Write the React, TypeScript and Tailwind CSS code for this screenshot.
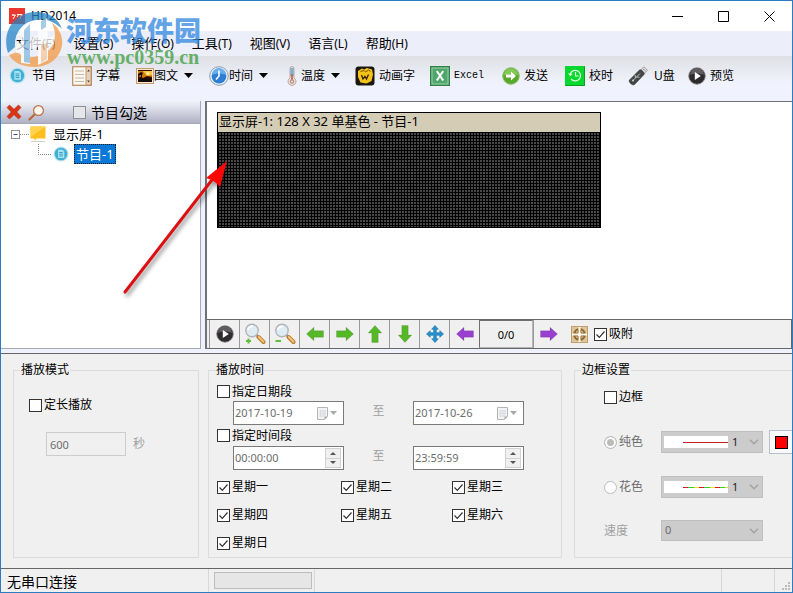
import React, { useState } from "react";

// --- Types
type IconProps = { className?: string };

type ToolItem = {
  label: string;
  icon: React.ReactNode;
  width: string;
  menu?: boolean;
  mono?: boolean;
};

// --- Icons
function ProgramIcon({ className = "size-4" }: IconProps) {
  return (
    <svg viewBox="0 0 16 16" className={className} aria-hidden="true">
      <circle cx="8" cy="8" r="7.5" fill="#b9e3f0" />
      <circle cx="8" cy="8" r="6.3" fill="#3fafd3" />
      <path d="M5 3.800h4.500l1.800 1.800V12H5z" fill="#a5e2f4" />
      <path d="M6.200 6.500h3.600M6.200 8.200h3.600M6.200 9.900h3.600" stroke="#2790b6" strokeWidth=".8" />
    </svg>
  );
}

function SubtitleIcon() {
  return (
    <svg viewBox="0 0 20 20" className="size-5" aria-hidden="true">
      <rect x=".7" y=".7" width="18.600" height="18.600" fill="#faf6f0" stroke="#b98a5e" strokeWidth="1.200" />
      <path d="M3 5h9M3 8.500h9M3 12h9M3 15.500h9" stroke="#c9b8a6" />
      <rect x="14" y="1" width="5" height="18" fill="#e6d2bc" stroke="#b98a5e" strokeWidth=".8" />
      <path d="M15.200 5.500l1.300-2 1.300 2zM15.200 14.500l1.300 2 1.300-2z" fill="#5b3414" />
    </svg>
  );
}

function PictureIcon() {
  return (
    <svg viewBox="0 0 18 16" className="h-4 w-[18px]" aria-hidden="true">
      <rect x=".5" y=".5" width="17" height="15" fill="#f6e9d8" stroke="#c99a6a" />
      <rect x="2" y="2" width="14" height="12" fill="#2a1204" />
      <path d="M2 3h14v6l-5-1-4 2-5-2z" fill="#d97a0c" />
      <path d="M7 3h9v4l-5 1z" fill="#ffc43a" />
      <circle cx="12" cy="5.500" r="1.500" fill="#fff3a8" />
      <path d="M2 6l3-2 2 1-1 2v4H5V7L2 8zM2 12c4-3 9-2 14-1v3H2z" fill="#160a04" />
    </svg>
  );
}

function ClockIcon() {
  return (
    <svg viewBox="0 0 20 20" className="size-5" aria-hidden="true">
      <circle cx="10" cy="10" r="9.300" fill="#e9f1fa" stroke="#8d9db0" />
      <circle cx="10" cy="10" r="7.400" fill="#2d7fd6" />
      <path d="M3 9a7 7 0 0 1 14 0c-4-2-10-2-14 0z" fill="#69aff0" />
      <path d="M10 4.500V10l-3 3.500" stroke="#fff" strokeWidth="1.600" fill="none" />
    </svg>
  );
}

function ThermometerIcon() {
  return (
    <svg viewBox="0 0 10 20" className="mr-1 h-5 w-[10px]" aria-hidden="true">
      <path d="M3 2.500a2 2 0 0 1 4 0V12a4 4 0 1 1-4 0z" fill="#e9e2de" stroke="#a79a94" strokeWidth=".8" />
      <path d="M3.300 2h3.400v8H3.300z" fill="#7fafcb" />
      <path d="M4.200 8h1.600v6H4.200z" fill="#cc5a35" />
      <circle cx="5" cy="15.500" r="2.200" fill="#c08a7c" />
      <circle cx="5" cy="15.500" r="1" fill="#f4e6e2" />
    </svg>
  );
}

function AnimatedTextIcon() {
  return (
    <svg viewBox="0 0 20 20" className="size-5" aria-hidden="true">
      <rect x=".5" y=".5" width="19" height="19" rx="3" fill="#1c1610" />
      <path d="M3 5l4-2.500 2 1L12 2l5 1.500 1 5-1.500 6.500-5 2.500-6-1L3 11z" fill="#f6c318" />
      <path d="M5.500 5.500l3.500-1 1.500 1.500 3-2 2 1.500" stroke="#7c5200" fill="none" />
      <path d="M6.500 9l1.500 4 2-2.500 1.500 2.500 2-4.500" stroke="#382100" strokeWidth="1.300" fill="none" />
    </svg>
  );
}

function ExcelIcon() {
  return (
    <svg viewBox="0 0 20 20" className="size-5" aria-hidden="true">
      <rect x=".5" y=".5" width="19" height="19" fill="#3f9a5d" stroke="#2f7f49" />
      <rect x="2" y="2" width="16" height="16" fill="#4fa76b" stroke="#9bd0aa" />
      <path d="M6.800 5l6.400 9.500M13.200 5l-6.400 9.500" stroke="#fff" strokeWidth="2" />
    </svg>
  );
}

function SendIcon() {
  return (
    <svg viewBox="0 0 18 18" className="size-[18px]" aria-hidden="true">
      <circle cx="9" cy="9" r="8.300" fill="#57a82b" stroke="#8fbf70" />
      <path d="M1.800 8.500a7.200 7.200 0 0 1 14.400 0c-4-2-10-2-14.400 0z" fill="#83c955" />
      <path d="M4 7.500h5V4.500L14 9l-5 4.500v-3H4z" fill="#fff" />
    </svg>
  );
}

function SyncTimeIcon() {
  return (
    <svg viewBox="0 0 20 20" className="size-5" aria-hidden="true">
      <rect width="20" height="20" fill="#08d82d" />
      <path d="M.5 19.500h19V.5" stroke="#079e24" fill="none" />
      <path d="M5.200 8A5.300 5.300 0 1 1 6 12.800" stroke="#dfffe2" strokeWidth="1.300" fill="none" />
      <path d="M3 7.500l2.300 2.800 2.400-2.500z" fill="#dfffe2" />
      <path d="M10.500 6v4h3" stroke="#dfffe2" strokeWidth="1.200" fill="none" />
    </svg>
  );
}

function UsbIcon() {
  return (
    <svg viewBox="0 0 20 20" className="mr-[2px] size-5" aria-hidden="true">
      <path d="M12.500 4.500L16 .8l3.500 3.500-3.700 3.500z" fill="#e2e2e2" stroke="#8d8d8d" strokeWidth=".8" />
      <path d="M15.500 3.200l.8.800M17 4.500l.7.700" stroke="#555" />
      <path d="M1.500 14L11.500 4c1.500-1.200 5.500 2.800 4.500 4.500L6.500 18.500c-2 1.500-6.500-2.500-5-4.500z" fill="#464646" stroke="#2a2a2a" strokeWidth=".6" />
      <path d="M5 14.500L12 7.500M7.500 12l-.3-3M8.500 11l3 .2" stroke="#c9c9c9" strokeWidth=".9" fill="none" />
      <circle cx="5" cy="14.500" r="1.100" fill="#c9c9c9" />
    </svg>
  );
}

function PlayIcon() {
  return (
    <svg viewBox="0 0 18 18" className="size-[18px]" aria-hidden="true">
      <circle cx="9" cy="9" r="8.300" fill="#2e2c2e" stroke="#8a8a8a" strokeWidth=".8" />
      <path d="M2 8a7 7 0 0 1 14 0c-4-2-10-2-14 0z" fill="#605d60" />
      <path d="M6.800 5l6 4-6 4z" fill="#fff" />
    </svg>
  );
}

function ZoomGlass({ minus = false }: { minus?: boolean }) {
  return (
    <svg viewBox="0 0 22 22" className="size-[22px]" aria-hidden="true">
      <path d="M12 11.500l3 3" stroke="#8d9298" strokeWidth="2" />
      <path d="M14.500 14l5 5" stroke="#b8782c" strokeWidth="4" strokeLinecap="round" />
      <path d="M14.800 14l4.700 4.700" stroke="#f6c377" strokeWidth="2" strokeLinecap="round" />
      <circle cx="8" cy="7.500" r="6.200" fill="#dfecf3" stroke="#b0b4b8" strokeWidth="1.400" />
      <path d="M4 7a4 4 0 0 1 5-3.500" stroke="#fff" strokeWidth="1.600" fill="none" />
      {minus ? (
        <path d="M1.500 18H7" stroke="#62bd3c" strokeWidth="2" />
      ) : (
        <path d="M2 18h5M4.500 15.500v5" stroke="#62bd3c" strokeWidth="2" />
      )}
    </svg>
  );
}

// arrow points to the left, rotated for the other directions
function ArrowIcon({ className = "" }: IconProps) {
  return (
    <svg viewBox="0 0 18 18" className={`size-[18px] ${className}`} aria-hidden="true">
      <path d="M.5 9l7.500-6.800v3.600h9.500v6.400H8v3.600z" fill="currentColor" stroke="#000" strokeOpacity=".15" strokeWidth=".8" />
    </svg>
  );
}

function MoveIcon() {
  return (
    <svg viewBox="0 0 18 18" className="size-[18px]" aria-hidden="true">
      <path
        d="M9 .5l3.300 3.700h-2v3.500h3.500v-2L17.500 9l-3.700 3.300v-2h-3.500v3.500h2L9 17.500l-3.300-3.700h2v-3.500H4.200v2L.5 9l3.700-3.300v2h3.500V4.200h-2z"
        fill="#2592d0"
        stroke="#17699d"
        strokeWidth=".6"
      />
    </svg>
  );
}

function TargetIcon() {
  return (
    <svg viewBox="0 0 17 17" className="size-[17px]" aria-hidden="true">
      <rect x=".5" y=".5" width="16" height="16" fill="#dcc69d" stroke="#bfa06c" />
      <circle cx="8.500" cy="8.500" r="5.400" fill="#f3e6cc" stroke="#94692c" strokeWidth="2" />
      <path d="M8.500 1v15M1 8.500h15" stroke="#fffaf0" strokeWidth="2.200" />
      <path d="M7 4v3H4M10 4v3h3M7 13v-3H4M10 13v-3h3" stroke="#94692c" fill="none" />
    </svg>
  );
}

function Chevron() {
  return (
    <svg viewBox="0 0 10 6" className="pointer-events-none absolute top-2 right-1 h-[6px] w-[10px]" aria-hidden="true">
      <path d="M1 .8l4 4 4-4" stroke="#a2a2a2" strokeWidth="1.400" fill="none" />
    </svg>
  );
}

// --- Controls
function Check({
  label,
  defaultChecked = false,
  soft = false,
  className = "",
}: {
  label: string;
  defaultChecked?: boolean;
  soft?: boolean;
  className?: string;
}) {
  const [checked, setChecked] = useState<boolean>(defaultChecked);
  return (
    <label className={`flex items-center whitespace-nowrap ${soft ? "gap-[5px]" : "gap-[2px]"} ${className}`}>
      <span className="relative size-[13px] shrink-0">
        <input
          type="checkbox"
          checked={checked}
          onChange={(e) => setChecked(e.target.checked)}
          className={[
            "block size-[13px] appearance-none border",
            soft ? "border-[#8e8f8f] bg-[#e6e6ea]" : "border-[#333333] bg-white",
          ].join(" ")}
        />
        {checked && (
          <svg viewBox="0 0 13 13" className="pointer-events-none absolute inset-0 size-[13px]" aria-hidden="true">
            <path d="M2.500 6.500l2.800 2.800 5.200-5.800" stroke="#333" strokeWidth="1.200" fill="none" />
          </svg>
        )}
      </span>
      {label}
    </label>
  );
}

function DateField({ value, name }: { value: string; name: string }) {
  return (
    <div className="flex h-6 w-[111px] items-center border border-[#7a7a7a] bg-white">
      <input
        aria-label={name}
        defaultValue={value}
        disabled
        className="min-w-0 flex-1 pl-px text-[11px] text-[#6d6d6d]"
      />
      <button type="button" disabled aria-label="日历" className="flex items-center gap-[2px] pr-[6px]">
        <svg viewBox="0 0 11 13" className="h-[13px] w-[11px]" aria-hidden="true">
          <path d="M.5.500h10v9l-3 3h-7z" fill="#f4f4f4" stroke="#b5b5b5" />
          <path d="M2 4h7M2 6.500h7M2 9h6M3.500 3v7M6 3v7M8 3v6" stroke="#ccd0dc" strokeWidth=".6" />
          <path d="M10.500 9.500h-3v3z" fill="#a9a9a9" />
        </svg>
        <svg viewBox="0 0 7 4" className="h-1 w-[7px]" aria-hidden="true">
          <path d="M0 0h7L3.500 4z" fill="#a9a9a9" />
        </svg>
      </button>
    </div>
  );
}

function TimeField({ value, name }: { value: string; name: string }) {
  return (
    <div className="flex h-6 w-[111px] items-center border border-[#7a7a7a] bg-white pr-[2px]">
      <input
        aria-label={name}
        defaultValue={value}
        disabled
        className="min-w-0 flex-1 pl-px text-[11px] text-[#6d6d6d]"
      />
      <div className="grid h-5 w-4 grid-rows-2 gap-px bg-[#d2d2d2] p-px">
        <button type="button" disabled aria-label="增加" className="grid place-items-center bg-[#f0f0f0]">
          <svg viewBox="0 0 6 3" className="h-[3px] w-[6px]" aria-hidden="true">
            <path d="M0 3h6L3 0z" fill="#555" />
          </svg>
        </button>
        <button type="button" disabled aria-label="减少" className="grid place-items-center bg-[#f0f0f0]">
          <svg viewBox="0 0 6 3" className="h-[3px] w-[6px]" aria-hidden="true">
            <path d="M0 0h6L3 3z" fill="#555" />
          </svg>
        </button>
      </div>
    </div>
  );
}

function LineSelect({ name, colorful = false }: { name: string; colorful?: boolean }) {
  return (
    <div className="relative w-[102px]">
      <select
        aria-label={name}
        disabled
        className="block h-[22px] w-full appearance-none border border-[#bfbfbf] bg-[#cccccc] pl-[70px] text-[11px] text-[#222222] opacity-100"
      >
        <option>1</option>
      </select>
      <svg viewBox="0 0 64 12" className="pointer-events-none absolute top-[5px] left-[3px] h-3 w-16" aria-hidden="true">
        <rect width="64" height="12" fill="#fff" />
        {colorful ? (
          <>
            <rect x="19" y="6" width="45" height="1" fill="#2fd02a" />
            <path d="M19 6h5v1h-5zM35 6h5v1h-5zM51 6h5v1h-5z" fill="#d0181e" />
            <path d="M30 6h5v1h-5zM46 6h5v1h-5zM61 6h3v1h-3z" fill="#e8dc2a" />
          </>
        ) : (
          <rect x="19" y="6" width="45" height="1" fill="#c31f22" />
        )}
      </svg>
      <Chevron />
    </div>
  );
}

// --- Data
const MENUS = ["文件(F)", "设置(S)", "操作(O)", "工具(T)", "视图(V)", "语言(L)", "帮助(H)"];

const TOOLS: ToolItem[] = [
  { label: "节目", icon: <ProgramIcon className="mr-[2px] size-[17px]" />, width: "w-[63px]" },
  { label: "字幕", icon: <SubtitleIcon />, width: "w-16" },
  { label: "图文", icon: <PictureIcon />, width: "w-[73px]", menu: true },
  { label: "时间", icon: <ClockIcon />, width: "w-[78px]", menu: true },
  { label: "温度", icon: <ThermometerIcon />, width: "w-[68px]", menu: true },
  { label: "动画字", icon: <AnimatedTextIcon />, width: "w-[75px]" },
  { label: "Excel", icon: <ExcelIcon />, width: "w-[72px]", mono: true },
  { label: "发送", icon: <SendIcon />, width: "w-[63px]" },
  { label: "校时", icon: <SyncTimeIcon />, width: "w-[63px]" },
  { label: "U盘", icon: <UsbIcon />, width: "w-[60px]" },
  { label: "预览", icon: <PlayIcon />, width: "w-16" },
];

const VIEW_TOOLS = [
  { label: "播放", icon: <PlayIcon /> },
  { label: "放大", icon: <ZoomGlass /> },
  { label: "缩小", icon: <ZoomGlass minus /> },
  { label: "左移", icon: <ArrowIcon className="text-[#55b827]" /> },
  { label: "右移", icon: <ArrowIcon className="rotate-180 text-[#55b827]" /> },
  { label: "上移", icon: <ArrowIcon className="rotate-90 text-[#55b827]" /> },
  { label: "下移", icon: <ArrowIcon className="-rotate-90 text-[#55b827]" /> },
  { label: "居中", icon: <MoveIcon /> },
  { label: "上一页", icon: <ArrowIcon className="text-[#9a3fd0]" /> },
];

const WEEKDAYS = ["星期一", "星期二", "星期三", "星期四", "星期五", "星期六", "星期日"];

// --- Sections
function TitleBar() {
  return (
    <header className="flex h-[30px] items-center bg-white pl-2">
      <svg viewBox="0 0 16 16" className="size-4" aria-hidden="true">
        <rect width="16" height="16" fill="#e8382f" />
        <path d="M3 7h3.500L4 11M4 6v2M8 6.500h4.500L11 11M8 9l2-3M13 6v2" stroke="#fff" fill="none" />
      </svg>
      <h1 className="ml-[6px] text-[12px] text-black">HD2014</h1>
      <div className="ml-auto flex h-full">
        <button type="button" aria-label="最小化" className="grid w-[46px] place-items-center">
          <svg viewBox="0 0 11 11" className="size-[11px]" aria-hidden="true">
            <path d="M0 5.500h11" stroke="#000" />
          </svg>
        </button>
        <button type="button" aria-label="最大化" className="grid w-[46px] place-items-center">
          <svg viewBox="0 0 11 11" className="size-[11px]" aria-hidden="true">
            <path d="M.5.500h10v10H.5z" stroke="#000" fill="none" />
          </svg>
        </button>
        <button type="button" aria-label="关闭" className="grid w-[46px] place-items-center">
          <svg viewBox="0 0 11 11" className="size-[11px]" aria-hidden="true">
            <path d="M.5.500l10 10M10.500.500l-10 10" stroke="#000" />
          </svg>
        </button>
      </div>
    </header>
  );
}

function ProgramTree() {
  return (
    <aside className="flex w-[200px] shrink-0 flex-col border-r border-b border-[#a5a9b5] bg-white">
      <div className="flex h-[23px] items-center border-b border-[#a5a9b5] bg-linear-to-b from-[#f1f3fb] to-[#b0b2c4] pl-[5px]">
        <button type="button" aria-label="删除">
          <svg viewBox="0 0 16 16" className="size-4" aria-hidden="true">
            <path d="M1 3.500L3.500 1 8 5.200 12.500 1 15 3.500 10.800 8l4.200 4.500-2.500 2.500L8 10.800 3.500 15 1 12.500 5.200 8z" fill="#d93617" stroke="#a8260e" strokeWidth=".5" />
          </svg>
        </button>
        <button type="button" aria-label="查找" className="ml-[6px]">
          <svg viewBox="0 0 17 17" className="size-[17px]" aria-hidden="true">
            <path d="M1.500 15.500L7 10" stroke="#b8683a" strokeWidth="2.200" strokeLinecap="round" />
            <circle cx="10.500" cy="6.500" r="4.900" fill="#fdf6ee" stroke="#b8734a" strokeWidth="1.200" />
          </svg>
        </button>
        <Check label="节目勾选" soft className="ml-7 text-[14px]" />
      </div>
      <ul className="text-[13px] leading-5">
        <li className="flex h-5 items-center pl-[10px]">
          <svg viewBox="0 0 18 20" className="h-5 w-[18px]" aria-hidden="true">
            <rect x=".5" y="6.500" width="8" height="8" fill="#fff" stroke="#919191" />
            <path d="M2.500 10.500h4" stroke="#3a52a4" />
            <path d="M9 10.500h9" stroke="#8a8a8a" strokeDasharray="1 1" />
          </svg>
          <svg viewBox="0 0 18 18" className="size-[18px]" aria-hidden="true">
            <path d="M1.500 1.500h15v12h-9l-2 2.500v-2.500h-4z" fill="#fdbf1e" />
            <path d="M1.500 1.500h15L1.500 12z" fill="#ffd34d" />
            <path d="M2 16.500h14" stroke="#d2d2d2" />
          </svg>
          <span className="ml-[6px]">显示屏-1</span>
        </li>
        <li className="flex h-5 items-center pl-[36px]">
          <svg viewBox="0 0 14 20" className="h-5 w-[14px]" aria-hidden="true">
            <path d="M1.500 0v10.500H14" stroke="#8a8a8a" strokeDasharray="1 1" fill="none" />
          </svg>
          <ProgramIcon className="ml-[2px] size-4" />
          <span className="ml-[5px] border border-dotted border-[#1b1b1b] bg-[#0a78d6] px-px leading-[18px] text-white">
            节目-1
          </span>
        </li>
      </ul>
    </aside>
  );
}

function ScreenView() {
  return (
    <section className="flex min-w-0 flex-1 flex-col border-t border-l-2 border-[#6f7278] bg-white">
      <div className="flex-1 overflow-hidden pt-[10px] pl-[10px]">
        <div className="w-96 border border-black">
          <h2 className="h-[19px] bg-[#d5ccb5] pl-px text-[13px] leading-4 whitespace-nowrap text-black">
            显示屏-1: 128 X 32 单基色 - 节目-1
          </h2>
          {/* LED matrix, one cell per 3px */}
          <div className="h-[95px] bg-[#484848] bg-[linear-gradient(to_right,#000_1px,transparent_1px),linear-gradient(to_bottom,#000_1px,transparent_1px)] bg-size-[3px_3px]" />
        </div>
      </div>
      <div className="flex h-[30px] items-stretch border border-l-0 border-[#666666] bg-[#f0f0f0] pl-[2px]">
        {VIEW_TOOLS.map((t) => (
          <button
            key={t.label}
            type="button"
            aria-label={t.label}
            className="grid w-[30px] place-items-center border-l border-[#9a9a9a]"
          >
            {t.icon}
          </button>
        ))}
        <output className="w-[54px] border border-[#6e6e6e] border-r-[#b5b5b5] border-b-[#b5b5b5] text-center text-[11px] leading-7">
          0/0
        </output>
        <button type="button" aria-label="下一页" className="grid w-[30px] place-items-center border-l border-[#9a9a9a]">
          <ArrowIcon className="rotate-180 text-[#9a3fd0]" />
        </button>
        <button type="button" aria-label="对齐" className="ml-2">
          <TargetIcon />
        </button>
        <Check label="吸附" defaultChecked className="ml-[6px]" />
      </div>
    </section>
  );
}

function PlaySettings() {
  const [lineKind, setLineKind] = useState<string>("solid");
  const box = "min-w-0 border border-[#dcdcdc]";
  const legend = "ml-[6px] px-px leading-4";

  return (
    <section className="flex overflow-hidden border-t border-[#666666] bg-[#f0f0f0] pt-2 pb-[10px] pl-3">
      <fieldset className={`w-[186px] shrink-0 ${box}`}>
        <legend className={legend}>播放模式</legend>
        <Check label="定长播放" className="mt-[18px] ml-[15px] h-[18px]" />
        <div className="mt-[18px] ml-8 flex items-center gap-[7px] text-[#a0a0a0]">
          <input
            id="seconds"
            defaultValue="600"
            disabled
            className="h-6 w-20 border border-[#cccccc] px-[3px] text-[11px] text-[#6d6d6d]"
          />
          <label htmlFor="seconds">秒</label>
        </div>
      </fieldset>

      <fieldset className={`ml-[9px] w-[354px] shrink-0 pl-2 ${box}`}>
        <legend className="-ml-px leading-4">播放时间</legend>
        <Check label="指定日期段" className="mt-1 h-[19px]" />
        <div className="flex pl-4">
          <DateField name="开始日期" value="2017-10-19" />
          <span className="w-[69px] text-center leading-5 text-[#a0a0a0]">至</span>
          <DateField name="结束日期" value="2017-10-26" />
        </div>
        <Check label="指定时间段" className="h-[21px]" />
        <div className="flex pl-4">
          <TimeField name="开始时间" value="00:00:00" />
          <span className="w-[69px] text-center leading-5 text-[#a0a0a0]">至</span>
          <TimeField name="结束时间" value="23:59:59" />
        </div>
        <div className="mt-[3px] grid auto-rows-[28px] grid-cols-[124px_111px_1fr]">
          {WEEKDAYS.map((d) => (
            <Check key={d} label={d} defaultChecked />
          ))}
        </div>
      </fieldset>

      <fieldset className={`ml-3 flex-1 border-r-0 ${box}`}>
        <legend className={legend}>边框设置</legend>
        <Check label="边框" className="mt-[10px] ml-[29px] h-[18px]" />
        <div className="mt-6 ml-[29px] grid grid-cols-[57px_102px_24px] items-center gap-y-[22px]">
          {[
            { id: "solid", label: "纯色" },
            { id: "mixed", label: "花色" },
          ].map((k) => (
            <React.Fragment key={k.id}>
              <label className="flex items-center gap-[2px] text-[#6d6d6d]">
                <input
                  type="radio"
                  name="line"
                  disabled
                  checked={lineKind === k.id}
                  onChange={() => setLineKind(k.id)}
                  className="size-[13px] appearance-none rounded-full border border-[#bcbcbc] bg-white checked:bg-[#bcbcbc] checked:shadow-[inset_0_0_0_2px_white]"
                />
                {k.label}
              </label>
              <LineSelect name={k.label} colorful={k.id === "mixed"} />
              {k.id === "solid" ? (
                <button
                  type="button"
                  aria-label="颜色"
                  className="ml-[6px] grid h-6 w-6 place-items-center border border-[#b4c0d0] bg-[#fafafa]"
                >
                  <span className="size-[13px] border border-black bg-[#fe0000]" />
                </button>
              ) : (
                <span />
              )}
            </React.Fragment>
          ))}
          <label htmlFor="speed" className="text-[#a0a0a0]">
            速度
          </label>
          <div className="relative">
            <select
              id="speed"
              disabled
              className="block h-[21px] w-full appearance-none border border-[#bfbfbf] bg-[#cccccc] pl-[3px] text-[11px] text-[#6d6d6d] opacity-100"
            >
              <option>0</option>
            </select>
            <Chevron />
          </div>
        </div>
      </fieldset>
    </section>
  );
}

function StatusBar() {
  return (
    <footer className="flex h-6 items-stretch border-t border-[#666666] bg-[#f0f0f0] text-[14px]">
      <span className="w-52 border-r border-[#d7d7d7] pl-[6px] leading-[25px]">无串口连接</span>
      <div className="flex items-center border-r border-[#d7d7d7] pr-[2px] pl-[5px]">
        <div className="h-[17px] w-[98px] border border-[#bcbcbc] bg-[#e6e6e6]" />
      </div>
      <div className="flex-1 border-r border-[#d7d7d7]" />
      <div className="w-[53px] border-r border-[#d7d7d7]" />
      <div className="flex w-[17px] items-end justify-end p-px">
        <svg viewBox="0 0 9 9" className="size-[9px]" aria-hidden="true">
          <path d="M6 0h2v2H6zM3 3h2v2H3zM6 3h2v2H6zM0 6h2v2H0zM3 6h2v2H3zM6 6h2v2H6z" fill="#bcbcbc" />
        </svg>
      </div>
    </footer>
  );
}

function Watermark() {
  return (
    <div className="pointer-events-none absolute top-2 left-1 flex items-start gap-px whitespace-nowrap">
      <svg viewBox="0 0 60 60" className="size-[60px] opacity-75" aria-hidden="true">
        <path d="M3 44C-4 22 10 3 31 3c13 0 23 7 26 17-8-8-17-11-26-9C17 13 9 24 10 38z" fill="#2584c6" />
        <path d="M47 14c18 12 12 43-17 44-13 0-22-5-26-12l8-3c6 5 11 6 17 5 17-2 26-17 18-34z" fill="#f39a45" />
        <path d="M11 27l14-13v15l8-2V13l9-4 1 20 6-2v8l-6 2v14l-10 5V38l-8 3v14l-9-1V43l-5 1v-8l5-2v-8z" fill="#fff" />
        <path d="M19 21l6-6v39l-6-1zM36 12l5-2v8l-5 3z" fill="#2584c6" fillOpacity=".55" />
        <path d="M36 36l6-2v16l-6 4z" fill="#f39a45" fillOpacity=".55" />
      </svg>
      <div>
        <p className="mt-[5px] font-['Noto_Sans_CJK_SC',sans-serif] text-[27px] leading-8 font-black text-[#2f86e0]/75">
          河东软件园
        </p>
        <p className="pl-px font-['Liberation_Serif',serif] text-[20px] leading-[22px] font-bold text-[#43a047]/80">
          www.pc0359.cn
        </p>
      </div>
    </div>
  );
}

function PointerArrow() {
  return (
    <svg viewBox="0 0 116 146" className="pointer-events-none absolute top-[153px] left-[117px] h-[146px] w-[116px] drop-shadow-[2px_3px_2px_rgba(0,0,0,0.45)]" aria-hidden="true">
      <path d="M7 138L97 22" stroke="#dc0f12" strokeWidth="3" strokeLinecap="round" />
      <path d="M109 7L88 24l6 2 3 2 5 5z" fill="#fb0505" />
    </svg>
  );
}

export default function App() {
  return (
    <div className="relative flex min-h-screen flex-col overflow-hidden border border-[#2b7cc0] bg-[#eff2fc] font-['Noto_Sans','Noto_Sans_CJK_SC',sans-serif] text-[12px] text-black">
      <TitleBar />

      <nav className="flex h-[25px] items-center gap-[18px] bg-[#eceef9] pl-[15px] text-[13px] leading-5">
        {MENUS.map((m) => (
          <button key={m} type="button" className="whitespace-nowrap">
            {m.slice(0, 2)}
            <span className="text-[12px]">{m.slice(2)}</span>
          </button>
        ))}
      </nav>

      <div className="flex h-[45px] items-center bg-linear-to-b from-[#dfe0e4] to-[#f0f3fd] to-60% pb-[6px] pl-2">
        {TOOLS.map((t) => (
          <button key={t.label} type="button" className={`flex shrink-0 items-center gap-1 whitespace-nowrap ${t.width}`}>
            {t.icon}
            <span className={t.menu ? "-ml-1" : t.mono ? "font-['Liberation_Mono',monospace] text-[10px]" : ""}>
              {t.label}
            </span>
            {t.menu && (
              <svg viewBox="0 0 9 5" className="ml-[2px] h-[5px] w-[9px]" aria-hidden="true">
                <path d="M0 0h9L4.500 5z" fill="#000" />
              </svg>
            )}
          </button>
        ))}
      </div>

      <main className="flex flex-1 gap-1 pb-1">
        <ProgramTree />
        <ScreenView />
      </main>

      <PlaySettings />
      <StatusBar />

      <Watermark />
      <PointerArrow />
    </div>
  );
}
